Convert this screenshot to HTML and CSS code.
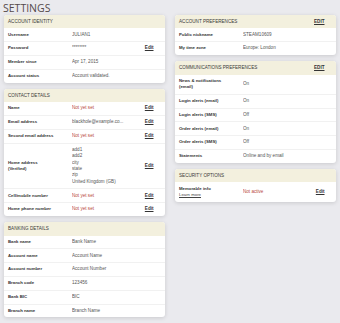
FILE: index.html
```html
<!DOCTYPE html>
<html>
<head>
<meta charset="utf-8">
<link rel="stylesheet" href="styles.css">
</head>
<body>
<h1 class="title">SETTINGS</h1>
<div class="columns">
  <div class="col">
    <section class="card">
      <div class="card-head"><span>Account identity</span></div>
      <div class="row"><div class="lbl">Username</div><div class="val">JULIAN1</div><div class="act"></div></div>
      <div class="row"><div class="lbl">Password</div><div class="val">********</div><div class="act"><a class="edit">Edit</a></div></div>
      <div class="row"><div class="lbl">Member since</div><div class="val">Apr 17, 2015</div><div class="act"></div></div>
      <div class="row"><div class="lbl">Account status</div><div class="val">Account validated.</div><div class="act"></div></div>
    </section>
    <section class="card">
      <div class="card-head"><span>Contact details</span></div>
      <div class="row"><div class="lbl">Name</div><div class="val unset">Not yet set</div><div class="act"><a class="edit">Edit</a></div></div>
      <div class="row"><div class="lbl">Email address</div><div class="val">blackhole@example.co...</div><div class="act"><a class="edit">Edit</a></div></div>
      <div class="row"><div class="lbl">Second email address</div><div class="val unset">Not yet set</div><div class="act"><a class="edit">Edit</a></div></div>
      <div class="row"><div class="lbl">Home address<br>(Verified)</div><div class="val">add1<br>add2<br>city<br>state<br>zip<br>United Kingdom (GB)</div><div class="act"><a class="edit">Edit</a></div></div>
      <div class="row"><div class="lbl">Cell/mobile number</div><div class="val unset">Not yet set</div><div class="act"><a class="edit">Edit</a></div></div>
      <div class="row"><div class="lbl">Home phone number</div><div class="val unset">Not yet set</div><div class="act"><a class="edit">Edit</a></div></div>
    </section>
    <section class="card">
      <div class="card-head"><span>Banking details</span></div>
      <div class="row"><div class="lbl">Bank name</div><div class="val">Bank Name</div><div class="act"></div></div>
      <div class="row"><div class="lbl">Account name</div><div class="val">Account Name</div><div class="act"></div></div>
      <div class="row"><div class="lbl">Account number</div><div class="val">Account Number</div><div class="act"></div></div>
      <div class="row"><div class="lbl">Branch code</div><div class="val">123456</div><div class="act"></div></div>
      <div class="row"><div class="lbl">Bank BIC</div><div class="val">BIC</div><div class="act"></div></div>
      <div class="row"><div class="lbl">Branch name</div><div class="val">Branch Name</div><div class="act"></div></div>
    </section>
  </div>
  <div class="col">
    <section class="card">
      <div class="card-head"><span>Account preferences</span><a class="edit">Edit</a></div>
      <div class="row"><div class="lbl">Public nickname</div><div class="val">STEAM10609</div><div class="act"></div></div>
      <div class="row"><div class="lbl">My time zone</div><div class="val">Europe: London</div><div class="act"></div></div>
    </section>
    <section class="card">
      <div class="card-head"><span>Communications preferences</span><a class="edit">Edit</a></div>
      <div class="row"><div class="lbl">News &amp; notifications<br>(email)</div><div class="val">On</div><div class="act"></div></div>
      <div class="row"><div class="lbl">Login alerts (email)</div><div class="val">On</div><div class="act"></div></div>
      <div class="row"><div class="lbl">Login alerts (SMS)</div><div class="val">Off</div><div class="act"></div></div>
      <div class="row"><div class="lbl">Order alerts (email)</div><div class="val">On</div><div class="act"></div></div>
      <div class="row"><div class="lbl">Order alerts (SMS)</div><div class="val">Off</div><div class="act"></div></div>
      <div class="row"><div class="lbl">Statements</div><div class="val">Online and by email</div><div class="act"></div></div>
    </section>
    <section class="card">
      <div class="card-head"><span>Security options</span></div>
      <div class="row"><div class="lbl">Memorable info<br><a class="learn">Learn more</a></div><div class="val unset">Not active</div><div class="act"><a class="edit">Edit</a></div></div>
    </section>
  </div>
</div>
</body>
</html>
```
FILE: styles.css
```css
html, body {
  margin: 0;
  padding: 0;
}
body {
  background: #eaeaee;
  font-family: "Liberation Sans", Arial, sans-serif;
  color: #444;
  width: 340px;
  height: 323px;
  overflow: hidden;
}
.title {
  margin: 2px 0 1px 3px;
  font-family: "Open Sans", "Liberation Sans", sans-serif;
  font-weight: normal;
  font-size: 10.5px;
  line-height: 12px;
  color: #54494a;
}
.columns {
  display: flex;
  gap: 10px;
  padding: 0 4px;
}
.col {
  width: 161px;
  display: flex;
  flex-direction: column;
  gap: 6.3px;
}
.card {
  background: #fff;
  border-radius: 3px;
  box-shadow: 0 1px 4px rgba(0, 0, 0, 0.14);
  overflow: hidden;
}
.card-head {
  background: #f3f0de;
  height: 13.4px;
  display: flex;
  align-items: center;
  justify-content: space-between;
  padding: 0 11.5px 0 4px;
  font-size: 4.6px;
  text-transform: uppercase;
  color: #3a3a3a;
}
.row {
  display: grid;
  grid-template-columns: 64px 1fr auto;
  align-items: center;
  padding: 3.2px 11.5px 3.2px 4px;
  border-top: 1px solid #f1f1f1;
  font-size: 4.6px;
  line-height: 6.4px;
}
.card-head + .row {
  border-top: none;
}
.lbl {
  color: #333;
  font-weight: bold;
  font-size: 4.3px;
}
.val {
  color: #555;
  white-space: nowrap;
  overflow: hidden;
}
.val.unset {
  color: #b9473c;
}
.edit {
  color: #333;
  font-weight: bold;
  text-decoration: underline;
  font-size: 4.6px;
}
.learn {
  color: #444;
  font-weight: normal;
  text-decoration: underline;
}
```
